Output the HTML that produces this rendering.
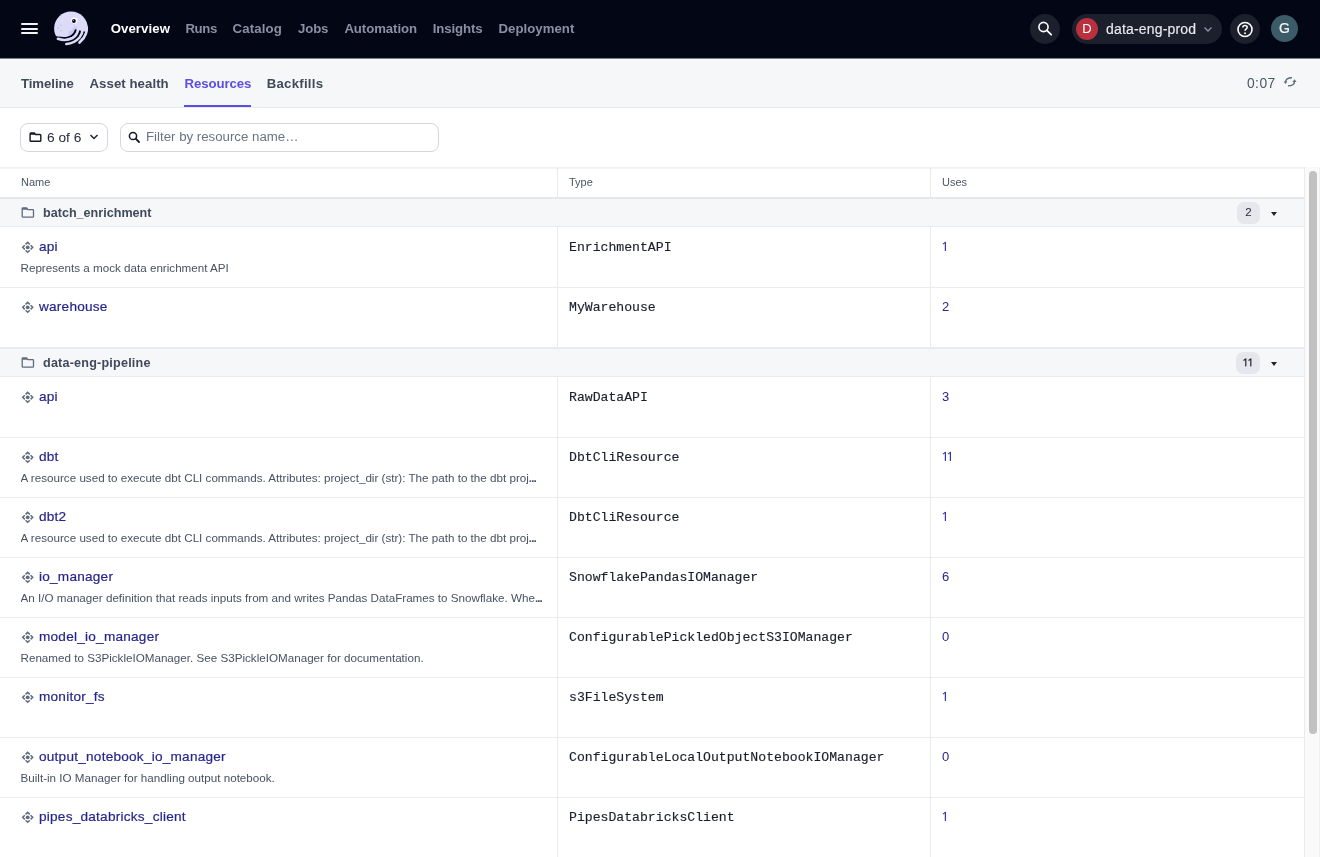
<!DOCTYPE html>
<html><head><meta charset="utf-8">
<style>
*{box-sizing:border-box;margin:0;padding:0}
html,body{width:1320px;height:857px;overflow:hidden;background:#fff;font-family:"Liberation Sans",sans-serif;}
#wrap{position:absolute;left:0;top:0;width:1320px;height:857px;will-change:transform}
.abs{position:absolute}
#nav{position:absolute;left:0;top:0;width:1320px;height:58px;background:#030615;}
.lnk{position:absolute;top:19.5px;font-size:13.2px;font-weight:bold;line-height:18px;color:#8B8FA2;white-space:nowrap}
.lnk.on{color:#FFFFFF}
#navline{position:absolute;left:0;top:58px;width:1320px;height:1px;background:#7d7f88}
#tabs{position:absolute;left:0;top:59px;width:1320px;height:48px;background:#F6F7F9}
#tabsb{position:absolute;left:0;top:107px;width:1320px;height:1px;background:#E6E8EC}
.tab{position:absolute;top:15.5px;font-size:13.2px;font-weight:bold;line-height:18px;color:#404A5B;white-space:nowrap}
.tab.on{color:#5A4FE0}
.circ{position:absolute;border-radius:50%}
.btn{position:absolute;border:1px solid #D3D6DE;border-radius:8px;background:#fff}
#table{position:absolute;left:0;top:167px;width:1304px;height:690px;overflow:hidden}
.hl{position:absolute;left:0;width:1304px;height:1px}
.vl{position:absolute;width:1px;background:#E8EAEE}
.th{position:absolute;font-size:11px;line-height:13px;color:#4B5565;white-space:nowrap}
.grp{position:absolute;left:0;width:1304px;height:27px;background:#F6F7F9}
.g{position:absolute;left:0;width:1304px;height:27px}
.r{position:absolute;left:0;width:1304px;height:60px}
.name{position:absolute;left:39px;top:11px;font-size:13.6px;letter-spacing:0.24px;line-height:18px;color:#25258E;white-space:nowrap;-webkit-text-stroke:0.2px #25258E}
.desc{position:absolute;left:20.5px;top:34px;font-size:11.65px;line-height:14px;color:#485163;white-space:nowrap;overflow:hidden;text-overflow:ellipsis;width:526px}
.type{position:absolute;left:569px;top:13px;font-family:"Liberation Mono",monospace;font-size:13.15px;line-height:16px;color:#1A1F2C;white-space:nowrap;-webkit-text-stroke:0.15px #1A1F2C}
.uses{position:absolute;left:942px;top:12px;font-size:13px;line-height:16px;color:#25258E}
.gname{position:absolute;left:43px;top:6px;font-size:12.6px;font-weight:bold;line-height:16px;color:#404A5B;white-space:nowrap}
.badge{position:absolute;top:2.5px;height:22.5px;border-radius:7px;background:#E5E7EC;font-size:11.5px;line-height:21px;text-align:center;color:#1F2433}
.caret{position:absolute;left:1271px;top:13px;width:0;height:0;border-left:3px solid transparent;border-right:3px solid transparent;border-top:4px solid #1F2433}
.ricon{position:absolute;left:21px;top:13px}
.ficon{position:absolute;left:18px;top:4px}
#sb{position:absolute;left:1304px;top:167px;width:16px;height:690px;background:#FAFAFA;border-left:1px solid #EBEBEB;border-right:1px solid #F0F0F0}
#thumb{position:absolute;left:3.6px;top:4px;width:8px;height:563px;border-radius:4px;background:#C1C1C1}
</style></head><body><div id="wrap">
<div id="nav">
<div class="abs" style="left:21px;top:23px;width:17px;height:2px;background:#F4F4F6;border-radius:1px"></div>
<div class="abs" style="left:21px;top:28px;width:17px;height:2px;background:#F4F4F6;border-radius:1px"></div>
<div class="abs" style="left:21px;top:32px;width:17px;height:2px;background:#F4F4F6;border-radius:1px"></div>
<svg class="abs" style="left:52px;top:9px" width="38" height="39" viewBox="52 9 38 39">
    <circle cx="71" cy="28.4" r="16.9" fill="#DCDBF8"/>
    <path d="M69 31.5 C72 31 73.5 28.5 74 26.5 C76.5 26.5 78 28 78 30 L76 35 L68 37 Z" fill="#C9C7F3"/>
    <circle cx="60.9" cy="25.4" r="0.9" fill="#C6C4F2"/>
    <circle cx="58.1" cy="28.1" r="0.9" fill="#C6C4F2"/>
    <circle cx="61.1" cy="30.8" r="0.9" fill="#C6C4F2"/>
    <path d="M50 34.6 C55 36.4 61 37.2 65.5 36.9 C70 36.5 73.3 34.2 74.5 30.5 C74.8 29.8 75.2 29.2 75.6 29.3 L79.8 30.4 L84.2 31.6 L90 31.5 L90 50 L50 50 Z" fill="#030615"/>
    <g fill="none" stroke="#DCDBF8" stroke-width="2.6" stroke-linecap="round">
      <path d="M57.9 38.8 C62 40.2 68 40.4 72.5 38 C76 36 77.8 32.5 78.2 28.5"/>
      <path d="M66.3 44 C71.5 43.6 76.5 41 79.5 37.5 C81.5 35 82.6 32 82.8 28.5"/>
      <path d="M79.5 42.6 C82.5 40 84.8 37 86 33.5 C86.6 31.5 86.8 29.5 86.8 27.5"/>
    </g>
    <circle cx="74.3" cy="20.5" r="3.1" fill="#fff"/>
    <circle cx="73.9" cy="21" r="1.9" fill="#030615"/>
    <circle cx="73.3" cy="20.3" r="0.5" fill="#fff"/>
  </svg>
<span class="lnk on" style="left:110.7px;letter-spacing:0.08px">Overview</span>
<span class="lnk" style="left:185.5px;letter-spacing:-0.417px">Runs</span>
<span class="lnk" style="left:232.5px;letter-spacing:0.163px">Catalog</span>
<span class="lnk" style="left:298px;letter-spacing:-0.12px">Jobs</span>
<span class="lnk" style="left:344.4px;letter-spacing:-0.067px">Automation</span>
<span class="lnk" style="left:432.7px;letter-spacing:-0.095px">Insights</span>
<span class="lnk" style="left:498.5px;letter-spacing:0.042px">Deployment</span>

  <div class="circ" style="left:1030px;top:14px;width:30px;height:30px;background:#1C1F2C"></div>
  <svg class="abs" style="left:1036px;top:19px" width="20" height="20" viewBox="0 0 20 20">
    <circle cx="7.5" cy="8" r="4.6" fill="none" stroke="#fff" stroke-width="1.6"/>
    <path d="M10.8 11.3 L15.2 15.7" stroke="#fff" stroke-width="1.8" stroke-linecap="round"/>
  </svg>
  <div class="abs" style="left:1072px;top:14px;width:150px;height:30px;border-radius:15px;background:#1C1F2C"></div>
  <div class="circ" style="left:1076px;top:17.5px;width:22px;height:22px;background:#B9303F;color:#fff;font-size:13px;line-height:22px;text-align:center">D</div>
  <span class="abs" style="left:1106px;top:19.5px;font-size:14px;letter-spacing:0.17px;line-height:18px;color:#E8EAF0;white-space:nowrap;-webkit-text-stroke:0.15px #E8EAF0">data-eng-prod</span>
  <svg class="abs" style="left:1203px;top:25px" width="10" height="8" viewBox="0 0 10 8">
    <path d="M1.5 2.5 L5 6 L8.5 2.5" fill="none" stroke="#8D91A5" stroke-width="1.3"/>
  </svg>
  <div class="circ" style="left:1230px;top:14px;width:30px;height:30px;background:#1C1F2C"></div>
  <svg class="abs" style="left:1235px;top:19.6px" width="20" height="20" viewBox="0 0 20 20">
    <circle cx="10" cy="9.5" r="7" fill="none" stroke="#fff" stroke-width="1.6"/>
    <path d="M7.8 7.6 C7.8 6.2 8.8 5.4 10 5.4 C11.3 5.4 12.2 6.3 12.2 7.4 C12.2 8.9 10 9 10 10.8" fill="none" stroke="#fff" stroke-width="1.5"/>
    <circle cx="10" cy="13.2" r="0.95" fill="#fff"/>
  </svg>
  <div class="circ" style="left:1271px;top:15px;width:27px;height:27px;background:#3A5B67;color:#F2F4F6;font-size:14px;line-height:27px;text-align:center;-webkit-text-stroke:0.2px #F2F4F6">G</div>
</div>
<div id="navline"></div>
<div id="tabs">
<span class="tab" style="left:21px;letter-spacing:-0.064px">Timeline</span>
<span class="tab" style="left:89.5px;letter-spacing:0.069px">Asset health</span>
<span class="tab on" style="left:184.5px;letter-spacing:-0.078px">Resources</span>
<span class="tab" style="left:266.75px;letter-spacing:0.25px">Backfills</span>
  <div class="abs" style="left:184px;top:46px;width:67px;height:2px;background:#5A4FE0"></div>
  <span class="abs" style="left:1247px;top:16.5px;font-size:13.8px;letter-spacing:0.45px;line-height:16px;color:#4A5568">0:07</span>
  <svg class="abs" style="left:1280px;top:14px" width="20" height="17" viewBox="1280 73 20 17">
    <path d="M1285.5 82.2 C1285.5 79.2 1288 77.7 1292 77.8" fill="none" stroke="#5F6B7D" stroke-width="1.4"/>
    <path d="M1283.7 81.6 L1287.3 81.6 L1285.5 84.1 Z" fill="#5F6B7D"/>
    <path d="M1294.5 81.2 C1294.5 84.4 1292 85.9 1288.1 85.8" fill="none" stroke="#5F6B7D" stroke-width="1.4"/>
    <path d="M1292.4 81.9 L1296.6 81.9 L1294.5 79.2 Z" fill="#5F6B7D"/>
  </svg>
</div>
<div id="tabsb"></div>

<div class="btn" style="left:20px;top:123px;width:88px;height:29px"></div>
<svg class="abs" style="left:26px;top:128px" width="22" height="18" viewBox="26 128 22 18">
  <path d="M30.1 133.7 Q30.1 132.9 30.9 132.9 L34.3 132.9 L35.5 134.5 L40 134.5 Q40.8 134.5 40.8 135.3 L40.8 140.4 Q40.8 141.2 40 141.2 L30.9 141.2 Q30.1 141.2 30.1 140.4 Z" fill="none" stroke="#141826" stroke-width="1.4" stroke-linejoin="round"/>
  <path d="M30.1 133 L34.3 133 L35.5 134.7 L30.1 134.7 Z" fill="#141826"/>
</svg>
<span class="abs" style="left:47px;top:129.5px;font-size:13.7px;line-height:16px;color:#1F2433">6 of 6</span>
<svg class="abs" style="left:88px;top:132px" width="12" height="10" viewBox="0 0 12 10">
  <path d="M2.5 3 L6 6.5 L9.5 3" fill="none" stroke="#1F2433" stroke-width="1.5"/>
</svg>
<div class="btn" style="left:120px;top:123px;width:319px;height:29px"></div>
<svg class="abs" style="left:127px;top:130px" width="14" height="14" viewBox="0 0 14 14">
  <circle cx="6" cy="6" r="3.6" fill="none" stroke="#141826" stroke-width="1.5"/>
  <path d="M8.7 8.7 L12 12" stroke="#141826" stroke-width="1.8" stroke-linecap="round"/>
</svg>
<span class="abs" style="left:146px;top:129px;font-size:13.25px;line-height:16px;color:#6A7384">Filter by resource name…</span>

<div id="table">
<div class="hl" style="top:0px;background:#F0F1F4"></div>
<div class="hl" style="top:1px;background:#F3F4F6"></div>
<div class="vl" style="left:557px;top:1px;height:30px"></div><div class="vl" style="left:930px;top:1px;height:30px"></div>
<span class="th" style="left:21px;top:9px">Name</span><span class="th" style="left:569px;top:9px">Type</span><span class="th" style="left:942px;top:9px">Uses</span>
<div class="hl" style="top:30px;height:2px;background:#E6E7EB"></div>
<div class="grp" style="top:32px"></div><div class="hl" style="top:59px;background:#E9EAEE"></div><div class="g" style="top:32px"><svg class="ficon" width="22" height="19" viewBox="18 203 22 19"><path d="M22.2 208.6 Q22.2 207.8 23 207.8 L26.6 207.8 L27.9 209.6 L32.7 209.6 Q33.5 209.6 33.5 210.4 L33.5 216.4 Q33.5 217.2 32.7 217.2 L23 217.2 Q22.2 217.2 22.2 216.4 Z" fill="none" stroke="#5F6B7D" stroke-width="1.3" stroke-linejoin="round"/><path d="M22.2 208 L26.6 208 L27.9 209.8 L22.2 209.8 Z" fill="#5F6B7D"/></svg><span class="gname" style="letter-spacing:0px">batch_enrichment</span><span class="badge" style="left:1237.3px;width:22.4px">2</span><div class="caret"></div></div>
<div class="vl" style="left:557px;top:60px;height:60px"></div><div class="vl" style="left:930px;top:60px;height:60px"></div><div class="hl" style="top:120px;background:#EBECEF"></div><div class="r" style="top:60px"><svg class="ricon" width="14" height="14" viewBox="0 0 14 14"><g fill="none" stroke="#5F6B7D" stroke-width="1.5" stroke-linejoin="miter" stroke-linecap="butt"><path d="M4.6 4.4 L6.7 2.3 L8.8 4.4"/><path d="M4.6 10.2 L6.7 12.3 L8.8 10.2"/><path d="M3.8 5.2 L1.7 7.3 L3.8 9.4"/><path d="M9.6 5.2 L11.7 7.3 L9.6 9.4"/></g><circle cx="6.7" cy="7.3" r="1.9" fill="#5F6B7D"/></svg><span class="name">api</span><span class="desc">Represents a mock data enrichment API</span><span class="type">EnrichmentAPI</span><span class="uses"><svg width="5" height="16" viewBox="0 0 5 16" style="display:inline-block;vertical-align:top"><rect x="2.8" y="2.9" width="1.15" height="9.1" fill="#30309A"/><path d="M0.9 5.1 L3.4 3.4" stroke="#30309A" stroke-width="1.1"/></svg></span></div>
<div class="vl" style="left:557px;top:121px;height:59px"></div><div class="vl" style="left:930px;top:121px;height:59px"></div><div class="hl" style="top:180px;background:#EBECEF"></div><div class="r" style="top:120px"><svg class="ricon" width="14" height="14" viewBox="0 0 14 14"><g fill="none" stroke="#5F6B7D" stroke-width="1.5" stroke-linejoin="miter" stroke-linecap="butt"><path d="M4.6 4.4 L6.7 2.3 L8.8 4.4"/><path d="M4.6 10.2 L6.7 12.3 L8.8 10.2"/><path d="M3.8 5.2 L1.7 7.3 L3.8 9.4"/><path d="M9.6 5.2 L11.7 7.3 L9.6 9.4"/></g><circle cx="6.7" cy="7.3" r="1.9" fill="#5F6B7D"/></svg><span class="name">warehouse</span><span class="type">MyWarehouse</span><span class="uses">2</span></div>
<div class="hl" style="top:181px;background:#E9EAEE"></div>
<div class="grp" style="top:182px"></div><div class="hl" style="top:209px;background:#E9EAEE"></div><div class="g" style="top:182px"><svg class="ficon" width="22" height="19" viewBox="18 203 22 19"><path d="M22.2 208.6 Q22.2 207.8 23 207.8 L26.6 207.8 L27.9 209.6 L32.7 209.6 Q33.5 209.6 33.5 210.4 L33.5 216.4 Q33.5 217.2 32.7 217.2 L23 217.2 Q22.2 217.2 22.2 216.4 Z" fill="none" stroke="#5F6B7D" stroke-width="1.3" stroke-linejoin="round"/><path d="M22.2 208 L26.6 208 L27.9 209.8 L22.2 209.8 Z" fill="#5F6B7D"/></svg><span class="gname" style="letter-spacing:0.2px">data-eng-pipeline</span><span class="badge" style="left:1235.7px;width:24px"><svg width="5" height="22" viewBox="0 -0.5 5 22" style="display:inline-block;vertical-align:top"><rect x="2.2" y="6.0" width="1.2" height="7.9" fill="#1F2433"/><path d="M0.5 7.9 L2.8 6.4" stroke="#1F2433" stroke-width="1.2"/></svg><svg width="5" height="22" viewBox="0 -0.5 5 22" style="display:inline-block;vertical-align:top"><rect x="2.2" y="6.0" width="1.2" height="7.9" fill="#1F2433"/><path d="M0.5 7.9 L2.8 6.4" stroke="#1F2433" stroke-width="1.2"/></svg></span><div class="caret"></div></div>
<div class="vl" style="left:557px;top:210px;height:60px"></div><div class="vl" style="left:930px;top:210px;height:60px"></div><div class="hl" style="top:270px;background:#EBECEF"></div><div class="r" style="top:210px"><svg class="ricon" width="14" height="14" viewBox="0 0 14 14"><g fill="none" stroke="#5F6B7D" stroke-width="1.5" stroke-linejoin="miter" stroke-linecap="butt"><path d="M4.6 4.4 L6.7 2.3 L8.8 4.4"/><path d="M4.6 10.2 L6.7 12.3 L8.8 10.2"/><path d="M3.8 5.2 L1.7 7.3 L3.8 9.4"/><path d="M9.6 5.2 L11.7 7.3 L9.6 9.4"/></g><circle cx="6.7" cy="7.3" r="1.9" fill="#5F6B7D"/></svg><span class="name">api</span><span class="type">RawDataAPI</span><span class="uses">3</span></div>
<div class="vl" style="left:557px;top:271px;height:59px"></div><div class="vl" style="left:930px;top:271px;height:59px"></div><div class="hl" style="top:330px;background:#EBECEF"></div><div class="r" style="top:270px"><svg class="ricon" width="14" height="14" viewBox="0 0 14 14"><g fill="none" stroke="#5F6B7D" stroke-width="1.5" stroke-linejoin="miter" stroke-linecap="butt"><path d="M4.6 4.4 L6.7 2.3 L8.8 4.4"/><path d="M4.6 10.2 L6.7 12.3 L8.8 10.2"/><path d="M3.8 5.2 L1.7 7.3 L3.8 9.4"/><path d="M9.6 5.2 L11.7 7.3 L9.6 9.4"/></g><circle cx="6.7" cy="7.3" r="1.9" fill="#5F6B7D"/></svg><span class="name">dbt</span><span class="desc">A resource used to execute dbt CLI commands. Attributes: project_dir (str): The path to the dbt proj<span style="font-weight:bold;letter-spacing:-0.9px">...</span></span><span class="type">DbtCliResource</span><span class="uses"><svg width="5" height="16" viewBox="0 0 5 16" style="display:inline-block;vertical-align:top"><rect x="2.8" y="2.9" width="1.15" height="9.1" fill="#30309A"/><path d="M0.9 5.1 L3.4 3.4" stroke="#30309A" stroke-width="1.1"/></svg><svg width="5" height="16" viewBox="0 0 5 16" style="display:inline-block;vertical-align:top"><rect x="2.8" y="2.9" width="1.15" height="9.1" fill="#30309A"/><path d="M0.9 5.1 L3.4 3.4" stroke="#30309A" stroke-width="1.1"/></svg></span></div>
<div class="vl" style="left:557px;top:331px;height:59px"></div><div class="vl" style="left:930px;top:331px;height:59px"></div><div class="hl" style="top:390px;background:#EBECEF"></div><div class="r" style="top:330px"><svg class="ricon" width="14" height="14" viewBox="0 0 14 14"><g fill="none" stroke="#5F6B7D" stroke-width="1.5" stroke-linejoin="miter" stroke-linecap="butt"><path d="M4.6 4.4 L6.7 2.3 L8.8 4.4"/><path d="M4.6 10.2 L6.7 12.3 L8.8 10.2"/><path d="M3.8 5.2 L1.7 7.3 L3.8 9.4"/><path d="M9.6 5.2 L11.7 7.3 L9.6 9.4"/></g><circle cx="6.7" cy="7.3" r="1.9" fill="#5F6B7D"/></svg><span class="name">dbt2</span><span class="desc">A resource used to execute dbt CLI commands. Attributes: project_dir (str): The path to the dbt proj<span style="font-weight:bold;letter-spacing:-0.9px">...</span></span><span class="type">DbtCliResource</span><span class="uses"><svg width="5" height="16" viewBox="0 0 5 16" style="display:inline-block;vertical-align:top"><rect x="2.8" y="2.9" width="1.15" height="9.1" fill="#30309A"/><path d="M0.9 5.1 L3.4 3.4" stroke="#30309A" stroke-width="1.1"/></svg></span></div>
<div class="vl" style="left:557px;top:391px;height:59px"></div><div class="vl" style="left:930px;top:391px;height:59px"></div><div class="hl" style="top:450px;background:#EBECEF"></div><div class="r" style="top:390px"><svg class="ricon" width="14" height="14" viewBox="0 0 14 14"><g fill="none" stroke="#5F6B7D" stroke-width="1.5" stroke-linejoin="miter" stroke-linecap="butt"><path d="M4.6 4.4 L6.7 2.3 L8.8 4.4"/><path d="M4.6 10.2 L6.7 12.3 L8.8 10.2"/><path d="M3.8 5.2 L1.7 7.3 L3.8 9.4"/><path d="M9.6 5.2 L11.7 7.3 L9.6 9.4"/></g><circle cx="6.7" cy="7.3" r="1.9" fill="#5F6B7D"/></svg><span class="name">io_manager</span><span class="desc">An I/O manager definition that reads inputs from and writes Pandas DataFrames to Snowflake. Whe<span style="font-weight:bold;letter-spacing:-0.9px">...</span></span><span class="type">SnowflakePandasIOManager</span><span class="uses">6</span></div>
<div class="vl" style="left:557px;top:451px;height:59px"></div><div class="vl" style="left:930px;top:451px;height:59px"></div><div class="hl" style="top:510px;background:#EBECEF"></div><div class="r" style="top:450px"><svg class="ricon" width="14" height="14" viewBox="0 0 14 14"><g fill="none" stroke="#5F6B7D" stroke-width="1.5" stroke-linejoin="miter" stroke-linecap="butt"><path d="M4.6 4.4 L6.7 2.3 L8.8 4.4"/><path d="M4.6 10.2 L6.7 12.3 L8.8 10.2"/><path d="M3.8 5.2 L1.7 7.3 L3.8 9.4"/><path d="M9.6 5.2 L11.7 7.3 L9.6 9.4"/></g><circle cx="6.7" cy="7.3" r="1.9" fill="#5F6B7D"/></svg><span class="name">model_io_manager</span><span class="desc">Renamed to S3PickleIOManager. See S3PickleIOManager for documentation.</span><span class="type">ConfigurablePickledObjectS3IOManager</span><span class="uses">0</span></div>
<div class="vl" style="left:557px;top:511px;height:59px"></div><div class="vl" style="left:930px;top:511px;height:59px"></div><div class="hl" style="top:570px;background:#EBECEF"></div><div class="r" style="top:510px"><svg class="ricon" width="14" height="14" viewBox="0 0 14 14"><g fill="none" stroke="#5F6B7D" stroke-width="1.5" stroke-linejoin="miter" stroke-linecap="butt"><path d="M4.6 4.4 L6.7 2.3 L8.8 4.4"/><path d="M4.6 10.2 L6.7 12.3 L8.8 10.2"/><path d="M3.8 5.2 L1.7 7.3 L3.8 9.4"/><path d="M9.6 5.2 L11.7 7.3 L9.6 9.4"/></g><circle cx="6.7" cy="7.3" r="1.9" fill="#5F6B7D"/></svg><span class="name">monitor_fs</span><span class="type">s3FileSystem</span><span class="uses"><svg width="5" height="16" viewBox="0 0 5 16" style="display:inline-block;vertical-align:top"><rect x="2.8" y="2.9" width="1.15" height="9.1" fill="#30309A"/><path d="M0.9 5.1 L3.4 3.4" stroke="#30309A" stroke-width="1.1"/></svg></span></div>
<div class="vl" style="left:557px;top:571px;height:59px"></div><div class="vl" style="left:930px;top:571px;height:59px"></div><div class="hl" style="top:630px;background:#EBECEF"></div><div class="r" style="top:570px"><svg class="ricon" width="14" height="14" viewBox="0 0 14 14"><g fill="none" stroke="#5F6B7D" stroke-width="1.5" stroke-linejoin="miter" stroke-linecap="butt"><path d="M4.6 4.4 L6.7 2.3 L8.8 4.4"/><path d="M4.6 10.2 L6.7 12.3 L8.8 10.2"/><path d="M3.8 5.2 L1.7 7.3 L3.8 9.4"/><path d="M9.6 5.2 L11.7 7.3 L9.6 9.4"/></g><circle cx="6.7" cy="7.3" r="1.9" fill="#5F6B7D"/></svg><span class="name">output_notebook_io_manager</span><span class="desc">Built-in IO Manager for handling output notebook.</span><span class="type">ConfigurableLocalOutputNotebookIOManager</span><span class="uses">0</span></div>
<div class="vl" style="left:557px;top:631px;height:59px"></div><div class="vl" style="left:930px;top:631px;height:59px"></div><div class="hl" style="top:690px;background:#EBECEF"></div><div class="r" style="top:630px"><svg class="ricon" width="14" height="14" viewBox="0 0 14 14"><g fill="none" stroke="#5F6B7D" stroke-width="1.5" stroke-linejoin="miter" stroke-linecap="butt"><path d="M4.6 4.4 L6.7 2.3 L8.8 4.4"/><path d="M4.6 10.2 L6.7 12.3 L8.8 10.2"/><path d="M3.8 5.2 L1.7 7.3 L3.8 9.4"/><path d="M9.6 5.2 L11.7 7.3 L9.6 9.4"/></g><circle cx="6.7" cy="7.3" r="1.9" fill="#5F6B7D"/></svg><span class="name">pipes_databricks_client</span><span class="type">PipesDatabricksClient</span><span class="uses"><svg width="5" height="16" viewBox="0 0 5 16" style="display:inline-block;vertical-align:top"><rect x="2.8" y="2.9" width="1.15" height="9.1" fill="#30309A"/><path d="M0.9 5.1 L3.4 3.4" stroke="#30309A" stroke-width="1.1"/></svg></span></div>
<div class="vl" style="left:557px;top:691px;height:59px"></div><div class="vl" style="left:930px;top:691px;height:59px"></div><div class="hl" style="top:750px;background:#EBECEF"></div><div class="r" style="top:690px"><svg class="ricon" width="14" height="14" viewBox="0 0 14 14"><g fill="none" stroke="#5F6B7D" stroke-width="1.5" stroke-linejoin="miter" stroke-linecap="butt"><path d="M4.6 4.4 L6.7 2.3 L8.8 4.4"/><path d="M4.6 10.2 L6.7 12.3 L8.8 10.2"/><path d="M3.8 5.2 L1.7 7.3 L3.8 9.4"/><path d="M9.6 5.2 L11.7 7.3 L9.6 9.4"/></g><circle cx="6.7" cy="7.3" r="1.9" fill="#5F6B7D"/></svg><span class="name">s3</span><span class="type">S3Resource</span><span class="uses"><svg width="5" height="16" viewBox="0 0 5 16" style="display:inline-block;vertical-align:top"><rect x="2.8" y="2.9" width="1.15" height="9.1" fill="#30309A"/><path d="M0.9 5.1 L3.4 3.4" stroke="#30309A" stroke-width="1.1"/></svg></span></div>
</div>
<div id="sb"><div id="thumb"></div></div>
</div></body></html>
